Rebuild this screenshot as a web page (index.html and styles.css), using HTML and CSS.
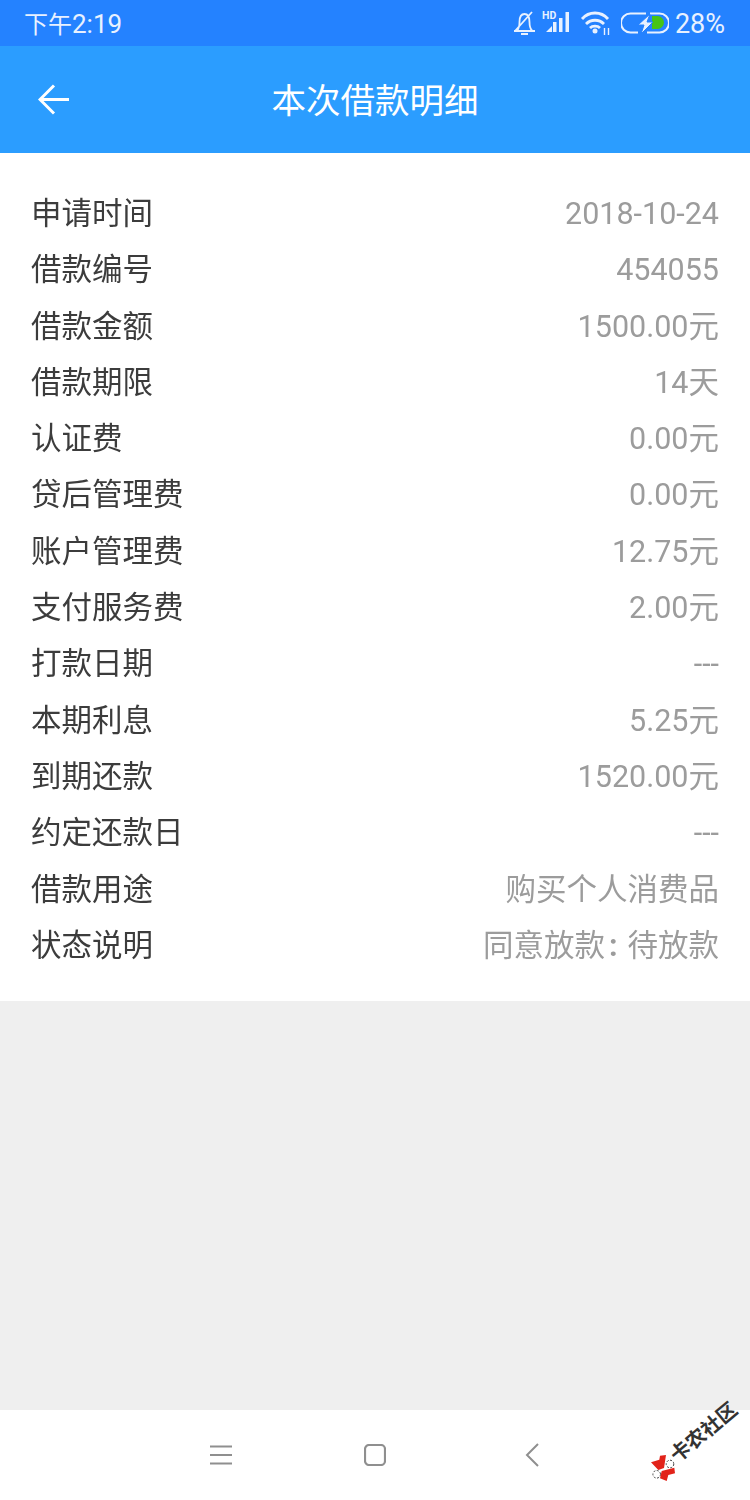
FILE: index.html
```html
<!DOCTYPE html>
<html lang="zh">
<head>
  <meta charset="UTF-8">
  <title>本次借款明细</title>
  <link rel="stylesheet" href="styles.css">
</head>
<body>
<div class="page">
  <div class="statusbar">
    <span class="time"><span class="time-cjk">下午</span>2:19</span>
    <div class="status-icons">
      <svg class="ico-bell" width="26" height="26" viewBox="0 0 26 26" fill="none" stroke="#e8f1ff" stroke-width="1.8">
        <path d="M2 21h21M5 20.500c2-2 2.500-4.500 2.500-8.500 0-5 2-8 5-8s5 3 5 8c0 4 .5 6.500 2.500 8.500M9 24h7M3 21L20 2"/>
      </svg>
      <svg class="ico-signal" width="28" height="27" viewBox="0 -3 28 27" fill="#e8f1ff">
        <path d="M4 21l6-6v6zM11 11h3.500v10H11zM17 7h3.500v14H17zM23.500 1H27v20h-3.500z"/>
        <text x="0" y="8" class="hd">HD</text>
      </svg>
      <svg class="ico-wifi" width="32" height="26" viewBox="0 0 32 26" fill="none" stroke="#e8f1ff" stroke-width="2.800">
        <path d="M2 9c7-8 19-8 26 0M6 14c5-5 13-5 18 0M10 18c2.500-2.500 7.500-2.500 10 0"/>
        <circle cx="15" cy="21" r="2.500" fill="#e8f1ff" stroke="none"/>
        <path d="M24.500 18v7M28.500 18v7" stroke-width="1.400"/>
      </svg>
      <svg class="ico-battery" width="48" height="24" viewBox="0 0 48 24" fill="none">
        <path d="M25 2.500H9.500a9.500 9.500 0 0 0 0 19H17M29 2.500h9.500a9.500 9.500 0 0 1 0 19H26" stroke="#e8f1ff" stroke-width="2"/>
        <path d="M31 5h5.500a6.500 6.500 0 0 1 0 13H31z" fill="#47c414"/>
        <path d="M29 3L17 14h6l-3 9 12-12h-6z" fill="#e8f1ff" stroke="#2482ff"/>
      </svg>
      <span class="pct">28%</span>
    </div>
  </div>

  <div class="titlebar">
    <svg class="back" width="31" height="31" viewBox="0 0 31 31" fill="none" stroke="#fff" stroke-width="3">
      <path d="M31 15.500H2M16 1.500L2 15.500l14 14"/>
    </svg>
    <h1>本次借款明细</h1>
  </div>

  <div class="detail">
    <div class="row"><span class="name">申请时间</span><span class="val">2018-10-24</span></div>
    <div class="row"><span class="name">借款编号</span><span class="val">454055</span></div>
    <div class="row"><span class="name">借款金额</span><span class="val">1500.00元</span></div>
    <div class="row"><span class="name">借款期限</span><span class="val">14天</span></div>
    <div class="row"><span class="name">认证费</span><span class="val">0.00元</span></div>
    <div class="row"><span class="name">贷后管理费</span><span class="val">0.00元</span></div>
    <div class="row"><span class="name">账户管理费</span><span class="val">12.75元</span></div>
    <div class="row"><span class="name">支付服务费</span><span class="val">2.00元</span></div>
    <div class="row"><span class="name">打款日期</span><span class="val">---</span></div>
    <div class="row"><span class="name">本期利息</span><span class="val">5.25元</span></div>
    <div class="row"><span class="name">到期还款</span><span class="val">1520.00元</span></div>
    <div class="row"><span class="name">约定还款日</span><span class="val">---</span></div>
    <div class="row"><span class="name">借款用途</span><span class="val">购买个人消费品</span></div>
    <div class="row"><span class="name">状态说明</span><span class="val">同意放款<span class="colon">:</span>待放款</span></div>
  </div>

  <div class="filler"></div>

  <div class="navbar">
    <svg class="nav-menu" width="22" height="20" viewBox="0 0 22 20" fill="none" stroke="#8f8f8f" stroke-width="2">
      <path d="M0 1.500h22M0 10h22M0 18.500h22"/>
    </svg>
    <svg class="nav-home" width="22" height="22" viewBox="0 0 22 22" fill="none" stroke="#8f8f8f" stroke-width="2.200">
      <rect x="1" y="1" width="20" height="20" rx="4"/>
    </svg>
    <svg class="nav-back" width="14" height="24" viewBox="0 0 14 24" fill="none" stroke="#8f8f8f" stroke-width="2">
      <path d="M13 1L2 12l11 11"/>
    </svg>
  </div>

  <svg class="wm-logo" width="30" height="30" viewBox="0 0 30 30">
    <circle cx="22" cy="12" r="3.800" fill="#fff" stroke="#444" stroke-dasharray="2 1.500"/>
    <circle cx="8.700" cy="22.300" r="3.800" fill="#fff" stroke="#444" stroke-dasharray="2 1.500"/>
    <path d="M3 10.300l8.300-2.600.7-4 6-.7-2 13-5.700 2zM13.700 19l12.600-3.300.7 5.600-6.700 1.700-1.600 6-6.700-2.700z" fill="#e2231a"/>
  </svg>
  <span class="wm-text">卡农社区</span>
</div>
</body>
</html>
```

FILE: styles.css
```css
* {
  box-sizing: border-box;
}

body {
  margin: 0;
  font-family: Roboto, "Noto Sans CJK SC", sans-serif;
  background-color: #efefef;
}

.page {
  position: relative;
  width: 750px;
  height: 1500px;
  display: flex;
  flex-direction: column;
  overflow: hidden;
}

.statusbar {
  height: 46px;
  flex-shrink: 0;
  background-color: #2482ff;
  color: #e8f1ff;
  padding: 0 25px 0 24px;
  display: flex;
  justify-content: space-between;
  align-items: center;
  font-size: 26px;
}

.time {
  margin-top: -1px;
}

.time-cjk {
  font-size: 24px;
}

.status-icons {
  display: flex;
  align-items: center;
}

.hd {
  font-size: 10.500px;
  font-weight: bold;
  font-family: Roboto, sans-serif;
}

.ico-signal {
  margin: -3px 0 0 4px;
}

.ico-wifi {
  margin-left: 10px;
}

.ico-battery {
  margin-left: 9px;
}

.pct {
  margin: 2px 0 0 6px;
  font-size: 27px;
}

.titlebar {
  height: 107px;
  flex-shrink: 0;
  background-color: #2b9dff;
  position: relative;
  display: flex;
  align-items: center;
  justify-content: center;
}

.titlebar h1 {
  margin: -3px 0 0;
  font-size: 34.500px;
  font-weight: normal;
  color: #fff;
}

.back {
  position: absolute;
  left: 38px;
  top: 38px;
}

.detail {
  background-color: #fff;
  height: 848px;
  padding: 33px 31px 0 31px;
  flex-shrink: 0;
}

.row {
  height: 56.300px;
  line-height: 56.300px;
  display: flex;
  justify-content: space-between;
  align-items: baseline;
  font-size: 30.500px;
  will-change: transform;
}

.name {
  color: #3c3c3c;
}

.val {
  color: #9c9c9c;
}

.colon {
  margin: 0 10px 0 4px;
  font-weight: bold;
}

.filler {
  flex: 1;
}

.navbar {
  height: 90px;
  flex-shrink: 0;
  background-color: #fff;
  display: flex;
  align-items: center;
  padding-left: 210px;
}

.nav-home {
  margin-left: 132px;
}

.nav-back {
  margin-left: 139px;
}

.wm-logo {
  position: absolute;
  left: 648px;
  top: 1452px;
}

.wm-text {
  position: absolute;
  left: 673px;
  top: 1445px;
  font-size: 20px;
  line-height: 26px;
  font-weight: bold;
  color: #333;
  white-space: nowrap;
  transform: rotate(-40deg);
  transform-origin: left center;
}
```
